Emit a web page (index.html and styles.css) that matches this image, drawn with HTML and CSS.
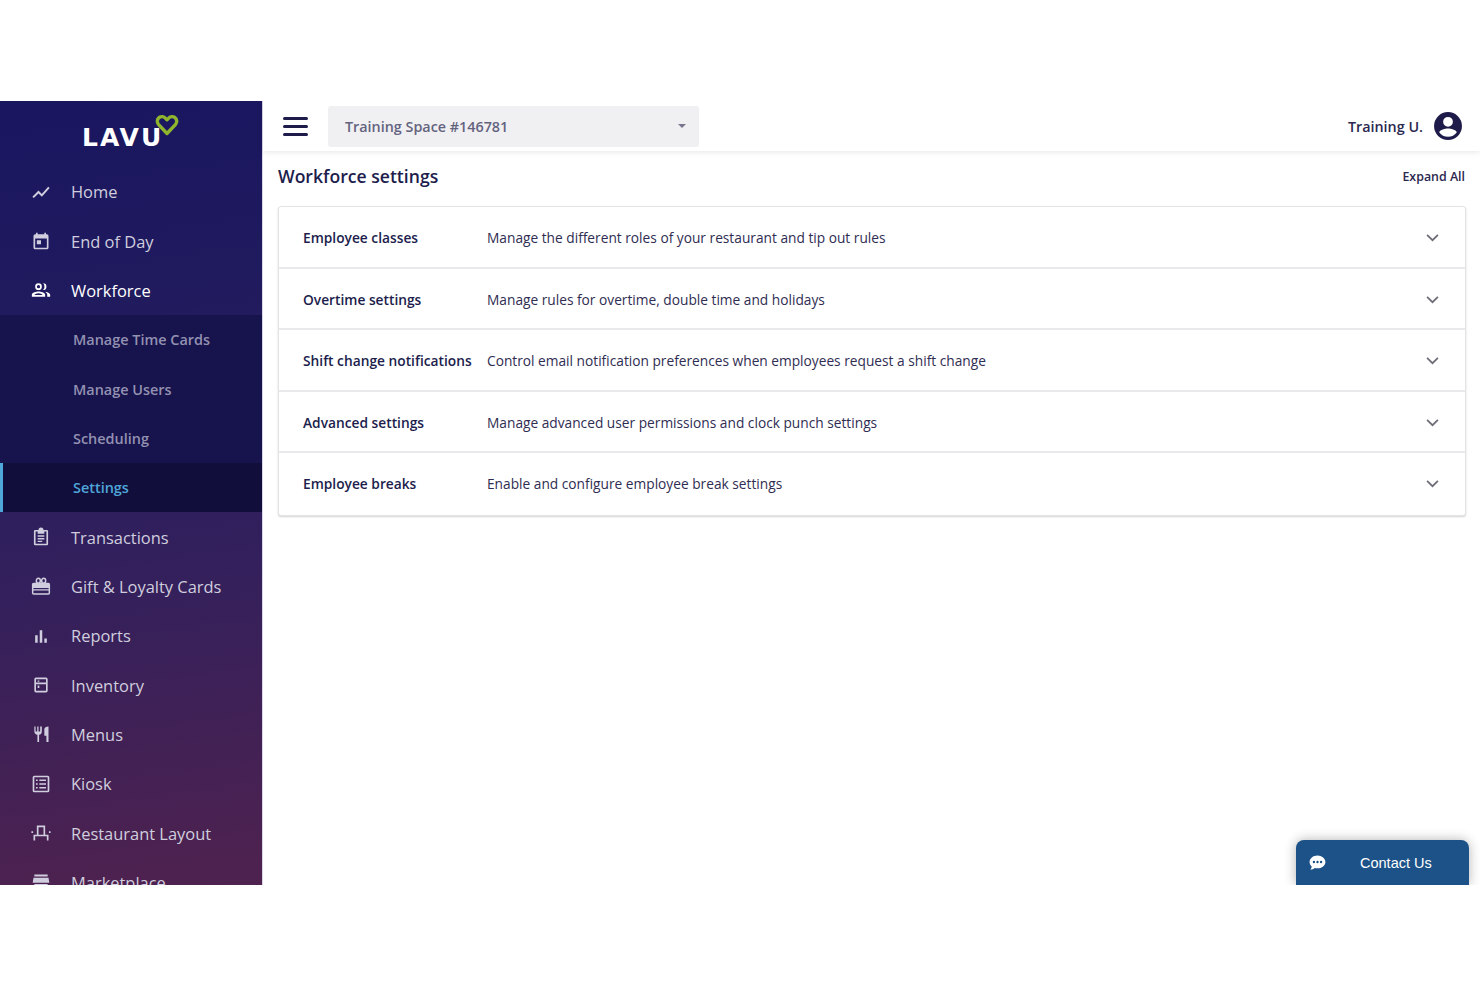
FILE: index.html
```html
<!DOCTYPE html>
<html lang="en">
<head>
<meta charset="utf-8">
<title>Workforce settings</title>
<link rel="stylesheet" href="styles.css">
</head>
<body>
<div class="app">
  <aside class="sidebar">
    <div class="logo">
      <span class="logo-text">LAVU</span>
      <svg class="logo-heart" viewBox="0 0 24 24"><path d="M12 20.500 3.600 11.600C1.600 9.400 2 6.300 4 4.700c2.200-1.700 5-1.200 6.600.6L12 6.800l1.400-1.500c1.600-1.800 4.400-2.300 6.600-.6 2 1.600 2.400 4.700.4 6.900Z" fill="none" stroke="#8fb52f" stroke-width="3.400" stroke-linejoin="round"/></svg>
    </div>
    <nav class="nav">
      <a class="item"><svg class="ico" viewBox="0 0 24 24"><path d="M2.500 18.500 9 12l4 4 8.500-9.500" fill="none" stroke="currentColor" stroke-width="2.400"/></svg><span>Home</span></a>
      <a class="item"><svg class="ico" viewBox="0 0 24 24"><path d="M19 4h-1V2h-2v2H8V2H6v2H5a2 2 0 0 0-2 2v14a2 2 0 0 0 2 2h14a2 2 0 0 0 2-2V6a2 2 0 0 0-2-2Zm0 16H5V9h14ZM7 11h5v5H7Z" fill="currentColor"/></svg><span>End of Day</span></a>
      <a class="item open"><svg class="ico" viewBox="0 0 24 24"><path d="M9 13.800c-2.600 0-8 1.300-8 4V20h16v-2.200c0-2.700-5.400-4-8-4ZM9 12a4 4 0 1 0 0-8 4 4 0 0 0 0 8Zm0-6a2 2 0 1 1 0 4 2 2 0 0 1 0-4Zm7 1.500a4 4 0 0 1-1.500 4.500 4 4 0 1 0 0-8A4 4 0 0 1 16 7.500ZM17 14c1.500 1 2.500 2.300 2.500 3.800V20H23v-2.200c0-2.200-3.400-3.500-6-3.800ZM4 18c.4-1 3-2.200 5-2.200s4.600 1.200 5 2.200Z" fill="currentColor" fill-rule="evenodd"/></svg><span>Workforce</span></a>
      <div class="sub">
        <a class="sub-item">Manage Time Cards</a>
        <a class="sub-item">Manage Users</a>
        <a class="sub-item">Scheduling</a>
        <a class="sub-item active">Settings</a>
      </div>
      <a class="item"><svg class="ico" viewBox="0 0 24 24"><path d="M19 3.500h-4a3 3 0 0 0-6 0H5a1.500 1.500 0 0 0-1.500 1.500v15.500A1.500 1.500 0 0 0 5 22h14a1.500 1.500 0 0 0 1.500-1.500V5A1.500 1.500 0 0 0 19 3.500Zm-.5 16.500h-13V5.500H8V8h8V5.500h2.500ZM8 10h8v1.700H8Zm0 3.200h8v1.700H8Zm0 3.200h5.500v1.700H8Z" fill="currentColor"/></svg><span>Transactions</span></a>
      <a class="item"><svg class="ico" viewBox="0 0 24 24"><g fill="none" stroke="currentColor" stroke-width="1.800"><rect x="2" y="9" width="20" height="12.500" rx="1.200"/><ellipse cx="8.800" cy="5.600" rx="2.400" ry="3"/><ellipse cx="15.200" cy="5.600" rx="2.400" ry="3"/></g><path d="M2 9h20v5.500H2Zm0 7h20v1.500H2Z" fill="currentColor"/></svg><span>Gift &amp; Loyalty Cards</span></a>
      <a class="item"><svg class="ico" viewBox="0 0 24 24"><path d="M5 11h3v9H5Zm5.500-6h3v15h-3ZM16 15h3v5h-3Z" fill="currentColor"/></svg><span>Reports</span></a>
      <a class="item"><svg class="ico" viewBox="0 0 24 24"><path d="M18 3H6a2 2 0 0 0-2 2v14a2 2 0 0 0 2 2h12a2 2 0 0 0 2-2V5a2 2 0 0 0-2-2Zm0 16H6v-8h12Zm0-10H6V5h12ZM8 6.500h2v1.500H8Zm0 6h2v3H8Z" fill="currentColor"/></svg><span>Inventory</span></a>
      <a class="item"><svg class="ico" viewBox="0 0 24 24"><path d="M11 9H9V3H7.500v6h-2V3H4v6c0 2.100 1.700 3.800 3.700 4v8.500h2V13c2-.2 3.300-1.900 3.300-4V3h-2ZM16 6v8h2.500v7.500H21V3c-2.800 0-5 1.700-5 3Z" fill="currentColor"/></svg><span>Menus</span></a>
      <a class="item"><svg class="ico" viewBox="0 0 24 24"><path d="M20 2H4a2 2 0 0 0-2 2v16a2 2 0 0 0 2 2h16a2 2 0 0 0 2-2V4a2 2 0 0 0-2-2Zm0 18H4V4h16ZM6 6.500h2v2H6Zm4 0h8v2h-8ZM6 11h2v2H6Zm4 0h8v2h-8Zm-4 4.500h2v2H6Zm4 0h8v2h-8Z" fill="currentColor"/></svg><span>Kiosk</span></a>
      <a class="item"><svg class="ico" viewBox="0 0 24 24"><path d="M7 3h10v11h-2V5H9v9H7ZM3 14h18v7h-2v-5H5v5H3ZM.5 10h2v2h-2Zm21 0h2v2h-2Z" fill="currentColor"/></svg><span>Restaurant Layout</span></a>
      <a class="item"><svg class="ico" viewBox="0 0 24 24"><path d="M4 3h16v2.500H4Zm-1 4h18l1 6H2Zm1 7.500h16V21H4Z" fill="currentColor"/></svg><span>Marketplace</span></a>
    </nav>
  </aside>
  <div class="main">
    <header class="topbar">
      <div class="burger"><i></i><i></i><i></i></div>
      <div class="select"><span>Training Space #146781</span><b class="caret"></b></div>
      <div class="user">
        <span>Training U.</span>
        <svg class="avatar" viewBox="0 0 24 24"><path d="M12 2a10 10 0 1 0 0 20 10 10 0 0 0 0-20Zm0 3.500a3.500 3.500 0 1 1 0 7 3.500 3.500 0 0 1 0-7Zm0 14.200a7.700 7.700 0 0 1-6.300-3.300c.7-1.700 4.200-2.600 6.300-2.600s5.600.9 6.300 2.600a7.700 7.700 0 0 1-6.300 3.300Z" fill="#1e1b4b" transform="translate(-1.400 -1.400) scale(1.117)"/></svg>
      </div>
    </header>
    <section class="content">
      <div class="title-row">
        <h1>Workforce settings</h1>
        <a class="expand">Expand All</a>
      </div>
      <div class="card">
        <div class="row"><strong>Employee classes</strong><span>Manage the different roles of your restaurant and tip out rules</span><svg class="chev" viewBox="0 0 12 8"><path d="M1 1.500 6 6.500l5-5" fill="none" stroke="currentColor" stroke-width="1.600"/></svg></div>
        <div class="row"><strong>Overtime settings</strong><span>Manage rules for overtime, double time and holidays</span><svg class="chev" viewBox="0 0 12 8"><path d="M1 1.500 6 6.500l5-5" fill="none" stroke="currentColor" stroke-width="1.600"/></svg></div>
        <div class="row"><strong>Shift change notifications</strong><span>Control email notification preferences when employees request a shift change</span><svg class="chev" viewBox="0 0 12 8"><path d="M1 1.500 6 6.500l5-5" fill="none" stroke="currentColor" stroke-width="1.600"/></svg></div>
        <div class="row"><strong>Advanced settings</strong><span>Manage advanced user permissions and clock punch settings</span><svg class="chev" viewBox="0 0 12 8"><path d="M1 1.500 6 6.500l5-5" fill="none" stroke="currentColor" stroke-width="1.600"/></svg></div>
        <div class="row"><strong>Employee breaks</strong><span>Enable and configure employee break settings</span><svg class="chev" viewBox="0 0 12 8"><path d="M1 1.500 6 6.500l5-5" fill="none" stroke="currentColor" stroke-width="1.600"/></svg></div>
      </div>
    </section>
    <button class="contact">
      <svg class="contact-ico" viewBox="0 0 24 24"><path d="M12 3C6.500 3 2 6.700 2 11.300c0 2.200 1 4.200 2.700 5.700-.1 1.500-.8 2.900-1.700 4 2.200-.1 4.100-.9 5.500-2.100 1.100.3 2.300.5 3.500.5 5.500 0 10-3.700 10-8.100S17.500 3 12 3Z" fill="#fff"/><circle cx="7.500" cy="11.300" r="1.500" fill="#1c5288"/><circle cx="12" cy="11.300" r="1.500" fill="#1c5288"/><circle cx="16.500" cy="11.300" r="1.500" fill="#1c5288"/></svg>
      <span>Contact Us</span>
    </button>
  </div>
</div>
</body>
</html>
```
FILE: styles.css
```css
* { box-sizing: border-box; }
html, body { margin: 0; height: 100%; background: #fff; overflow: hidden; }
body { padding-top: 101px; font-family: "Open Sans", "Noto Sans", sans-serif; color: #1e1b4b; }
.app { display: flex; height: 784px; overflow: hidden; }

.sidebar { flex: 0 0 263px; height: 784px; overflow: hidden; background: linear-gradient(172deg, #191660 0%, #211b5e 28%, #33205c 60%, #4f224f 100%); border-right: 1px solid #d8d6e6; color: #d9d6e6; }
.logo { position: relative; height: 66px; }
.logo-text { position: absolute; left: 82px; top: 22px; font-family: "DejaVu Sans", sans-serif; font-weight: 700; font-size: 25px; line-height: 30px; letter-spacing: 2px; color: #fff; }
.logo-heart { position: absolute; left: 155px; top: 12px; width: 24px; height: 24px; }
.nav { display: flex; flex-direction: column; }
.item { display: flex; align-items: center; height: 49.350px; padding-left: 31px; font-size: 16.450px; color: #d0cede; }
.item.open { color: #fff; }
.ico { width: 20px; height: 20px; margin-right: 20px; flex: none; }
.sub { display: flex; flex-direction: column; background: #17134d; }
.sub-item { display: flex; align-items: center; height: 49.350px; padding-left: 73px; font-size: 14.450px; font-weight: 600; color: #9391b1; }
.sub-item.active { background: #110e3c; color: #4fa6d8; box-shadow: inset 3px 0 0 #4fa6d8; }

.main { position: relative; flex: 1; min-width: 0; }
.topbar { display: flex; align-items: center; height: 50px; padding: 0 17px 0 20px; background: #fff; box-shadow: 0 1px 6px rgba(0, 0, 0, .1); }
.burger { display: flex; flex-direction: column; gap: 5px; width: 25px; margin-right: 20px; }
.burger i { display: block; height: 3px; border-radius: 2px; background: #1e1b4b; }
.select { display: flex; align-items: center; justify-content: space-between; width: 371px; height: 41px; padding: 0 13px 0 17px; border-radius: 3px; background: #f0f0f2; color: #64637f; font-size: 14.350px; font-weight: 600; }
.caret { width: 0; height: 0; border: 4px solid transparent; border-top-color: #77768c; border-bottom: 0; }
.user { display: flex; align-items: center; gap: 10px; margin-left: auto; font-size: 14.350px; font-weight: 600; color: #2a2850; }
.avatar { width: 30px; height: 30px; }

.content { padding: 0 14px 0 15px; }
.title-row { display: flex; align-items: center; justify-content: space-between; height: 50px; margin-bottom: 5px; padding-right: 1px; }
h1 { margin: 0; font-size: 17.600px; font-weight: 600; color: #201d4c; }
.expand { font-size: 12.400px; font-weight: 600; color: #2a2850; }
.card { border: 1px solid #e4e4e6; border-radius: 3px; background: #fff; box-shadow: 0 1px 2px rgba(0, 0, 0, .18); }
.row { display: flex; align-items: center; height: 61.600px; padding: 1.500px 26px 0 24px; border-bottom: 2px solid #e9e9eb; font-size: 13.720px; color: #2f2d52; }
.row:last-child { border-bottom-color: transparent; }
.row strong { flex: 0 0 184px; font-size: 13.750px; font-weight: 600; color: #201d4c; white-space: nowrap; }
.chev { width: 13px; height: 9px; margin-left: auto; color: #6d6d78; }

.contact { position: absolute; right: 11px; bottom: 0; display: flex; align-items: center; width: 173px; height: 45px; padding: 0 0 0 12px; border: 0; border-radius: 8px 8px 0 0; background: #1c5288; color: #fff; font-family: "Liberation Sans", Arial, sans-serif; font-size: 14.500px; box-shadow: 0 0 12px rgba(0, 0, 0, .3); }
.contact-ico { width: 19px; height: 19px; margin-right: 33px; }
```
